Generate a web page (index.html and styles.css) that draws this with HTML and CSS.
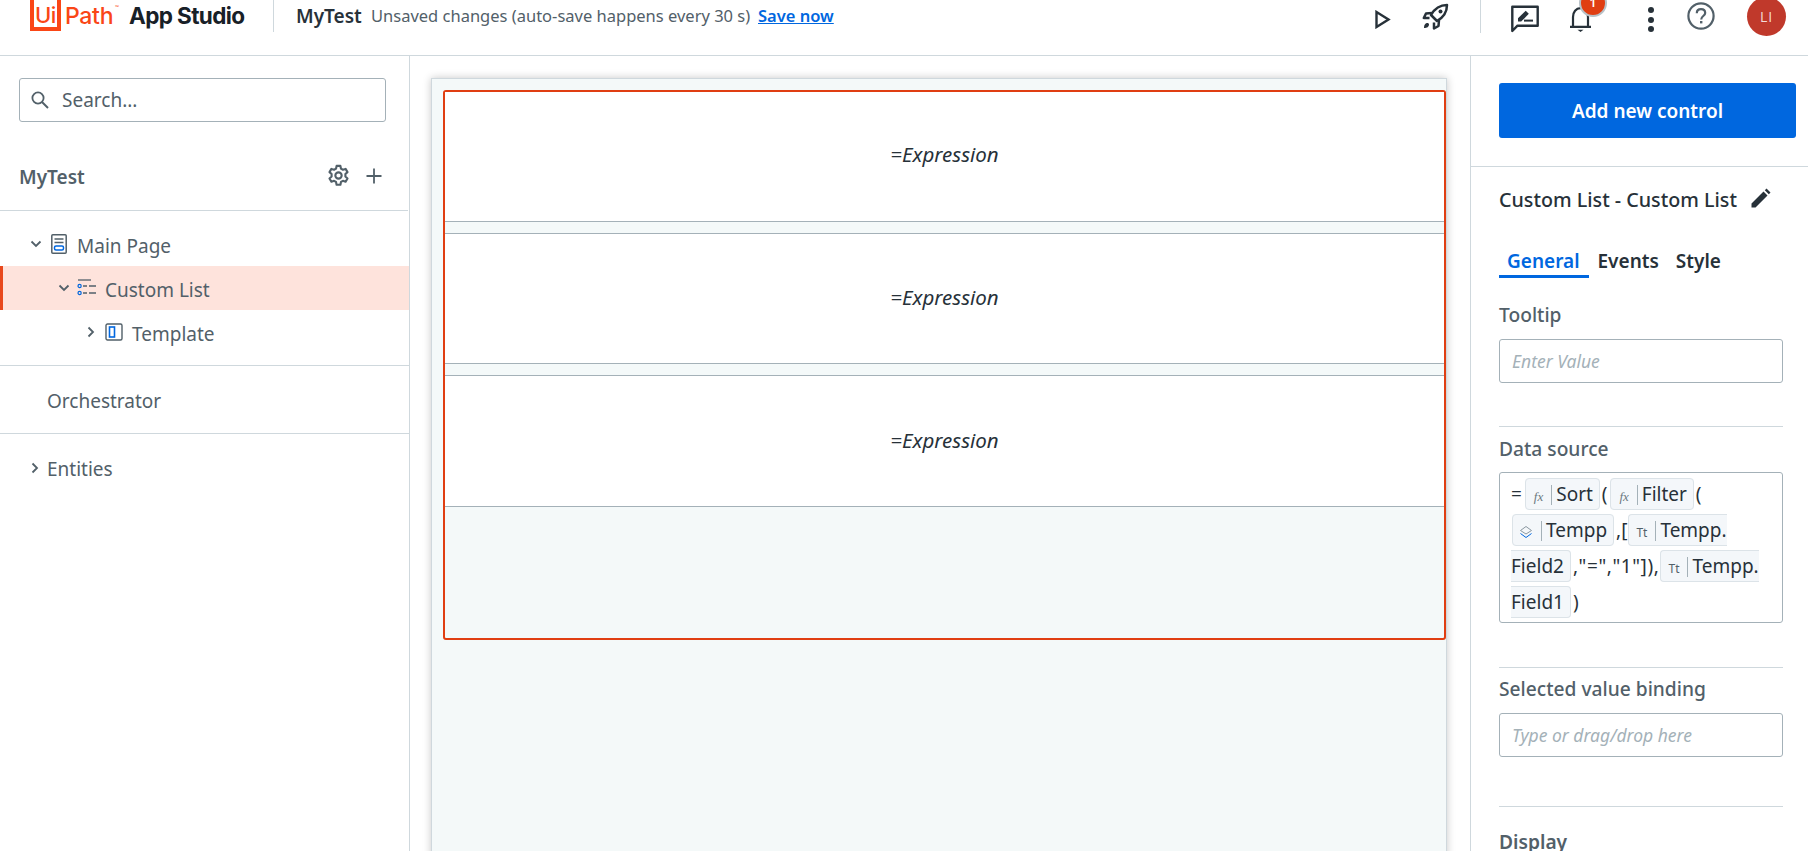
FILE: index.html
```html
<!DOCTYPE html>
<html lang="en">
<head>
<meta charset="utf-8">
<title>UiPath App Studio</title>
<link rel="stylesheet" href="styles.css">
</head>
<body>
<header class="topbar">
  <div class="brand">
    <span class="logo-box">Ui</span><span class="logo-path">Path</span><span class="logo-tm">™</span>
    <span class="logo-app">App Studio</span>
  </div>
  <span class="vline vline-left"></span>
  <span class="proj">MyTest</span>
  <span class="unsaved">Unsaved changes (auto-save happens every 30 s)</span>
  <a class="save" href="#">Save now</a>
  <div class="top-actions">
    <svg class="i-play" width="16" height="19" viewBox="0 0 16 19"><path d="M1.5 2 L13.5 9.5 L1.5 17 Z" fill="none" stroke="#273139" stroke-width="2.4"/></svg>
    <svg class="i-rocket" width="27" height="27" viewBox="0 0 27 27"><g fill="none" stroke="#273139" stroke-width="2.5" stroke-linejoin="round"><path d="M25 2 C18 2 13 5 9 12 L15 18 C22 14 25 9 25 2 Z"/><path d="M10 10 L4 10.5 L1.8 15 L7.5 15"/><path d="M17 17 L16.5 23 L12 25.5 L12 19.5"/></g><circle cx="18.5" cy="8.5" r="2" fill="#273139"/><path d="M2 25 C2 22 3 20 6 20 L7 21 C7 24 5 25 2 25 Z" fill="#273139"/></svg>
    <span class="vline vline-right"></span>
    <svg class="i-feedback" width="28" height="28" viewBox="0 0 28 28"><path d="M1.3 26 V1.8 H26.7 V20.7 H6.5 Z" fill="none" stroke="#273139" stroke-width="2.4" stroke-linejoin="round"/><path d="M7 16.5 V13.3 L14.7 5.8 L17.8 8.8 L10.2 16.5 Z" fill="#273139"/><rect x="13" y="14.6" width="9" height="2" fill="#273139"/></svg>
    <div class="bell">
      <svg width="23" height="27" viewBox="0 0 23 27"><path d="M1 21.8 H22 M4 21 V12 C4 7 7 3.2 11.5 3.2 C16 3.2 19 7 19 12 V21" fill="none" stroke="#273139" stroke-width="2.2"/><path d="M8.5 24.8 H14.5 L11.5 27 Z" fill="#273139"/></svg>
      <span class="badge">1</span>
    </div>
    <div class="dots"><i></i><i></i><i></i></div>
    <svg class="i-help" width="28" height="28" viewBox="0 0 28 28"><circle cx="14" cy="14" r="12.6" fill="none" stroke="#526069" stroke-width="2.2"/><path d="M9.8 11.2 C9.8 8.6 11.6 7.2 14 7.2 C16.4 7.2 18.2 8.7 18.2 10.9 C18.2 14 14.2 14 14.2 17.4" fill="none" stroke="#526069" stroke-width="2.2"/><rect x="13" y="19" width="2.4" height="2.4" fill="#526069"/></svg>
    <span class="avatar">LI</span>
  </div>
</header>

<main class="workspace">
  <aside class="left">
    <div class="searchwrap">
      <div class="search">
        <svg width="20" height="20" viewBox="0 0 20 20"><circle cx="8" cy="8" r="5.6" fill="none" stroke="#526069" stroke-width="1.8"/><path d="M12 12 L18 18" stroke="#526069" stroke-width="2"/></svg>
        <span>Search...</span>
      </div>
    </div>
    <div class="proj-row">
      <span class="proj-name">MyTest</span>
      <svg class="i-gear" width="23" height="23" viewBox="0 0 24 24"><path fill="none" stroke="#526069" stroke-width="2.2" stroke-linejoin="round" d="M10 2 h4 l.6 2.9 2 1.1 2.8-.9 2 3.4-2.2 2 v2.6 l2.2 2-2 3.4-2.8-.9-2 1.1-.6 2.9 h-4 l-.6-2.9-2-1.1-2.8.9-2-3.4 2.2-2 v-2.6 l-2.2-2 2-3.4 2.8.9 2-1.1 z"/><circle cx="12" cy="12" r="3.3" fill="none" stroke="#526069" stroke-width="2.2"/></svg>
      <svg class="i-plus" width="16" height="16" viewBox="0 0 16 16"><path d="M8 0.5 V15.5 M0.5 8 H15.5" stroke="#526069" stroke-width="1.8"/></svg>
    </div>
    <div class="tree">
      <div class="node lvl0">
        <svg class="chev" width="12" height="8" viewBox="0 0 12 8"><path d="M1.5 1.5 L6 6 L10.5 1.5" fill="none" stroke="#526069" stroke-width="1.8"/></svg>
        <svg class="ico" width="16" height="20" viewBox="0 0 16 20"><rect x="0.8" y="0.8" width="14.4" height="18.4" rx="1" fill="none" stroke="#526069" stroke-width="1.5"/><path d="M3.5 5 H12.5 M3.5 8.5 H12.5" stroke="#526069" stroke-width="1.4"/><rect x="3.5" y="12" width="9" height="4" rx="1.5" fill="none" stroke="#0067df" stroke-width="1.5"/></svg>
        <span>Main Page</span>
      </div>
      <div class="node lvl1 sel">
        <svg class="chev" width="12" height="8" viewBox="0 0 12 8"><path d="M1.5 1.5 L6 6 L10.5 1.5" fill="none" stroke="#526069" stroke-width="1.8"/></svg>
        <svg class="ico" width="20" height="18" viewBox="0 0 20 18"><path d="M1 1 H14" stroke="#526069" stroke-width="1.3"/><path d="M6 7 H10 M12 7 H19 M6 14 H10 M12 14 H19" stroke="#526069" stroke-width="1.3"/><circle cx="2.6" cy="7" r="1.6" fill="none" stroke="#0067df" stroke-width="1.2"/><circle cx="2.6" cy="14" r="1.6" fill="none" stroke="#0067df" stroke-width="1.2"/></svg>
        <span>Custom List</span>
      </div>
      <div class="node lvl2">
        <svg class="chev-r" width="8" height="12" viewBox="0 0 8 12"><path d="M1.5 1.5 L6 6 L1.5 10.5" fill="none" stroke="#526069" stroke-width="1.8"/></svg>
        <svg class="ico" width="18" height="18" viewBox="0 0 18 18"><rect x="1" y="1" width="16" height="16" rx="1.5" fill="none" stroke="#526069" stroke-width="1.4"/><rect x="4.5" y="4" width="5" height="10" fill="none" stroke="#0067df" stroke-width="1.6"/></svg>
        <span>Template</span>
      </div>
    </div>
    <div class="section orch">Orchestrator</div>
    <div class="section ent">
      <svg class="chev-r" width="8" height="12" viewBox="0 0 8 12"><path d="M1.5 1.5 L6 6 L1.5 10.5" fill="none" stroke="#526069" stroke-width="1.8"/></svg>
      <span>Entities</span>
    </div>
  </aside>

  <section class="center">
    <div class="canvas">
      <div class="list">
        <div class="row">=Expression</div>
        <div class="row">=Expression</div>
        <div class="row">=Expression</div>
      </div>
    </div>
  </section>

  <aside class="right">
    <div class="addwrap"><button class="add">Add new control</button></div>
    <div class="props">
      <div class="title">
        <span>Custom List - Custom List</span>
        <svg width="20" height="20" viewBox="0 0 20 20"><path d="M0.5 19.5 V15.5 L12.5 3.5 L16.5 7.5 L4.5 19.5 Z M13.8 2.2 L15.5 0.5 L19.5 4.5 L17.8 6.2 Z" fill="#273139"/></svg>
      </div>
      <div class="tabs">
        <span class="tab on">General</span><span class="tab">Events</span><span class="tab">Style</span>
      </div>
      <div class="field f-tooltip">
        <label class="lbl">Tooltip</label>
        <div class="input">Enter Value</div>
      </div>
      <div class="field f-data">
        <label class="lbl">Data source</label>
        <div class="expr">= <span class="chip"><span class="head"><i class="fx">fx</i><span class="sep"></span>Sort</span></span> ( <span class="chip"><span class="head"><i class="fx">fx</i><span class="sep"></span>Filter</span></span> ( <span class="chip"><span class="head"><svg class="layers" width="14" height="14" viewBox="0 0 14 14"><path d="M7 1.5 L12.5 5.5 L7 9 L1.5 5.5 Z" fill="none" stroke="#8a97a0" stroke-width="1"/><path d="M1.5 8.5 L7 12.5 L12.5 8.5" fill="none" stroke="#0067df" stroke-width="1"/></svg><span class="sep"></span>Tempp</span></span> ,[<span class="chip"><span class="head"><span class="tt">Tt</span><span class="sep"></span>Tempp.</span><wbr>Field2</span> <span class="lit">,"=","1"]),</span><span class="chip"><span class="head"><span class="tt">Tt</span><span class="sep"></span>Tempp.</span><wbr>Field1</span> )</div>
      </div>
      <div class="field f-sel">
        <label class="lbl">Selected value binding</label>
        <div class="input">Type or drag/drop here</div>
      </div>
      <div class="field f-disp">
        <label class="lbl strong">Display</label>
      </div>
    </div>
  </aside>
</main>
</body>
</html>
```
FILE: styles.css
```css
* { box-sizing: border-box; }
html, body { margin: 0; height: 851px; overflow: hidden; background: #fff; }
body { font-family: "Noto Sans", sans-serif; color: #273139; }

.topbar { height: 56px; border-bottom: 1px solid #cfd8dd; display: flex; align-items: flex-start; position: relative; overflow: hidden; background: #fff; }
.brand { display: flex; align-items: flex-start; margin-left: 30px; width: 243px; height: 40px; }
.logo-box { width: 31px; height: 31px; border: 4px solid #fa4616; border-top-width: 0; color: #fa4616; font: 500 22px/31px "Inter", sans-serif; text-align: center; letter-spacing: -0.5px; flex: none; }
.logo-path { color: #fa4616; font: 500 23px/32px "Inter", sans-serif; letter-spacing: -0.3px; margin-left: 4px; width: 50px; flex: none; }
.logo-tm { color: #fa4616; font-size: 5px; line-height: 14px; width: 14px; flex: none; }
.logo-app { font: 700 22.5px/32px "Inter", sans-serif; letter-spacing: -0.6px; color: #182027; white-space: nowrap; }
.vline { display: block; width: 1px; background: #cfd8dd; }
.vline-left { height: 32px; }
.proj { margin-left: 22px; font-size: 19px; font-weight: 600; line-height: 32px; width: 75px; }
.unsaved { font-size: 16.5px; color: #526069; line-height: 32px; width: 387px; white-space: nowrap; }
.save { font-size: 16.5px; font-weight: 600; color: #0067df; line-height: 32px; white-space: nowrap; }

.top-actions { position: absolute; left: 0; top: 0; right: 0; height: 55px; pointer-events: none; }
.top-actions > * { position: absolute; }
.i-play { left: 1375px; top: 10px; }
.i-rocket { left: 1422px; top: 3px; }
.vline-right { left: 1480px; top: 0; height: 33px; }
.i-feedback { left: 1511px; top: 5px; }
.bell { left: 1569px; top: 5px; width: 23px; height: 27px; }
.badge { position: absolute; left: 10px; top: -16px; width: 28px; height: 28px; border-radius: 50%; background: #e03e12; border: 2px solid #b8c2c8; color: #fff; font-size: 12px; font-weight: 600; line-height: 24px; text-align: center; }
.dots { left: 1648px; top: 7px; width: 6px; display: flex; flex-direction: column; gap: 3.5px; }
.dots i { display: block; width: 6px; height: 6px; border-radius: 50%; background: #273139; }
.i-help { left: 1687px; top: 2px; }
.avatar { left: 1747px; top: -3px; width: 39px; height: 39px; border-radius: 50%; background: #c0392b; color: #f5dcd8; font-family: "Open Sans", sans-serif; font-size: 14px; text-align: center; line-height: 39px; letter-spacing: 1px; }

.workspace { display: grid; grid-template-columns: 410px 1060px 1fr; height: 795px; }
.left { border-right: 1px solid #cfd8dd; color: #526069; font-size: 19px; }
.searchwrap { padding: 22px 23px 0 19px; }
.search { height: 44px; border: 1px solid #a4b1b8; border-radius: 3px; display: flex; align-items: center; padding-left: 10px; gap: 12px; }
.search span { line-height: 22px; }
.proj-row { height: 89px; border-bottom: 1px solid #cfd8dd; display: flex; align-items: center; padding: 21px 26px 0 19px; margin-right: 1px; }
.proj-name { font-weight: 600; flex: 1; }
.i-gear { margin-right: 16px; }
.i-gear, .i-plus { margin-top: -2px; }
.tree { height: 155px; border-bottom: 1px solid #cfd8dd; padding-top: 11px; }
.node { height: 44px; display: flex; align-items: center; }
.node span { line-height: 22px; padding-top: 4px; }
.lvl0 { padding-left: 30px; }
.lvl0 .chev { margin-right: 9px; }
.lvl0 .ico { margin-right: 10px; }
.lvl1 { padding-left: 55px; background: #fee3dc; border-left: 3px solid #e8481c; }
.lvl1 .chev { margin-right: 7px; }
.lvl1 .ico { margin-right: 8px; }
.lvl2 { padding-left: 87px; }
.lvl2 .chev-r { margin-right: 10px; }
.lvl2 .ico { margin-right: 9px; }
.section { display: flex; align-items: center; border-bottom: 1px solid #cfd8dd; }
.orch { height: 68px; padding: 2px 0 0 47px; }
.ent { height: 72px; padding: 0 0 2px 31px; gap: 8px; border-bottom: 0; }
.ent .chev-r { margin-top: -3px; }

.center { padding: 22px 23px 0 21px; overflow: hidden; }
.canvas { height: 800px; background: #f4f9f9; border: 1px solid #cfd8dd; box-shadow: 0 0 8px rgba(0, 0, 0, .22); padding: 11px 0 0 11px; }
.list { width: 1003px; height: 550px; border: 2px solid #e03e12; border-radius: 3px; display: flex; flex-direction: column; gap: 11px; }
.row { height: 131px; background: #fff; border-top: 1px solid #a4b1b8; border-bottom: 1px solid #a4b1b8; display: flex; align-items: center; justify-content: center; font-size: 20.5px; font-style: italic; color: #273139; flex: none; padding-bottom: 3px; }
.row:first-child { border-top: 0; height: 130px; padding-bottom: 5px; }
.row:last-child { height: 132px; }

.right { border-left: 1px solid #cfd8dd; overflow: hidden; }
.addwrap { height: 111px; padding: 27px 12px 0 28px; border-bottom: 1px solid #cfd8dd; }
.add { display: block; width: 297px; height: 55px; border: 0; border-radius: 3px; background: #0067df; color: #fff; font: 600 19px "Noto Sans", sans-serif; }
.props { padding: 0 25px 0 28px; }
.title { display: flex; align-items: center; height: 64px; font-size: 19.7px; font-weight: 500; gap: 14px; white-space: nowrap; }
.title svg { margin-top: -2px; }
.tabs { display: flex; height: 37px; margin-top: 14px; font-size: 19px; font-weight: 600; }
.tab { line-height: 32px; margin-right: 17px; height: 33px; }
.tab.on { color: #0067df; border-bottom: 3px solid #0067df; padding: 0 9px 0 8px; margin-right: 9px; }
.lbl { display: block; font-size: 19.2px; font-weight: 500; color: #526069; line-height: 22px; white-space: nowrap; }
.lbl.strong { font-weight: 600; }
.input { height: 44px; border: 1px solid #a4b1b8; border-radius: 3px; margin-top: 13px; padding-left: 12px; font-size: 17.5px; font-style: italic; color: #a4b1b8; line-height: 42px; }
.field { border-bottom: 1px solid #cfd8dd; }
.f-tooltip { padding-top: 22px; height: 145px; }
.f-data { padding-top: 11px; height: 241px; }
.f-sel { padding-top: 10px; height: 139px; }
.f-disp { padding-top: 24px; border-bottom: 0; }
.lbl + .expr { margin-top: 12px; }
.expr { height: 151px; border: 1px solid #a4b1b8; border-radius: 3px; padding: 3px 10px 0 11px; font-size: 19px; line-height: 36px; color: #273139; word-spacing: -3px; }
.chip { background: #f4f7fa; border: 1px solid #dce3e8; border-radius: 4px; padding: 2px 6px 2px 0; margin-left: 1px; color: #273139; }
.head { white-space: nowrap; }
.lit { letter-spacing: 0.6px; }
.sep { display: inline-block; width: 1px; height: 20px; background: #a4b1b8; margin: 0 4px 0 8px; vertical-align: -4px; line-height: 1; }
.fx { font: italic 13px/1 "Liberation Serif", serif; color: #6b7780; margin-left: 8px; }
.tt { font-size: 12px; line-height: 1; color: #526069; margin-left: 7px; }
.layers { vertical-align: -2px; margin-left: 6px; }
```
